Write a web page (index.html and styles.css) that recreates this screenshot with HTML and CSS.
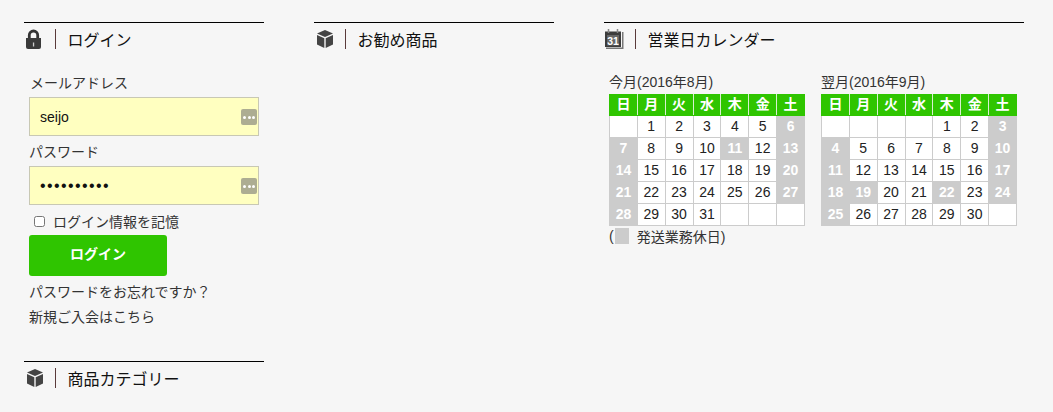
FILE: index.html
```html
<!DOCTYPE html>
<html lang="ja">
<head>
<meta charset="utf-8">
<title>ログイン</title>
<link rel="stylesheet" href="styles.css">
</head>
<body>
<div class="page">
  <div class="col col-side">
    <section class="box">
      <h2 class="head">
        <span class="ico"><svg width="18" height="20" viewBox="0 0 18 20"><path d="M4.300 10V6.200a4.200 4.200 0 0 1 8.400 0V10" fill="none" stroke="#333" stroke-width="2.800"/><path d="M1 9h15v9a2 2 0 0 1-2 2H3a2 2 0 0 1-2-2z" fill="#3a3a3a"/><rect x="7.900" y="13.500" width="1.300" height="4" fill="#ccc"/></svg></span>
        <span class="title">ログイン</span>
      </h2>
      <form class="login">
        <label class="lbl">メールアドレス</label>
        <div class="field"><input class="inp" type="text" value="seijo"><span class="key"><i></i><i></i><i></i></span></div>
        <label class="lbl lbl2">パスワード</label>
        <div class="field"><input class="inp inp-pw" type="password" value="abcdefghij"><span class="key"><i></i><i></i><i></i></span></div>
        <label class="rem"><input class="chk" type="checkbox"><span>ログイン情報を記憶</span></label>
        <button class="btn" type="button">ログイン</button>
        <a class="lnk lnk1">パスワードをお忘れですか？</a>
        <a class="lnk lnk2">新規ご入会はこちら</a>
      </form>
    </section>
    <section class="box box-cat">
      <h2 class="head">
        <span class="ico"><svg width="19" height="20" viewBox="0 0 19 20"><path d="M10 1l8 3.500L10 8 2 4.500z" fill="#444"/><path d="M2 6l7.300 3.200V19L2 15.600z" fill="#444"/><path d="M18 6l-7.300 3.200V19l7.300-3.400z" fill="#444"/></svg></span>
        <span class="title">商品カテゴリー</span>
      </h2>
    </section>
  </div>
  <div class="col col-side">
    <section class="box">
      <h2 class="head">
        <span class="ico"><svg width="19" height="20" viewBox="0 0 19 20"><path d="M10 1l8 3.500L10 8 2 4.500z" fill="#444"/><path d="M2 6l7.300 3.200V19L2 15.600z" fill="#444"/><path d="M18 6l-7.300 3.200V19l7.300-3.400z" fill="#444"/></svg></span>
        <span class="title">お勧め商品</span>
      </h2>
    </section>
  </div>
  <div class="col col-cal">
    <section class="box">
      <h2 class="head">
        <span class="ico"><svg width="21" height="20" viewBox="0 0 21 20"><path d="M18 3h1.500v17H2v-1.500h16z" fill="#777"/><rect x="1" y="2.500" width="16" height="15.500" fill="#3c3c3c"/><path d="M4.500 0v4M13.500 0v4" stroke="#888" stroke-width="1.500"/><rect x="3" y="6" width="12" height="10.500" fill="#666"/><text x="9" y="15.500" class="ico-num">31</text></svg></span>
        <span class="title">営業日カレンダー</span>
      </h2>
      <div class="cals">
        <div class="cal">
          <div class="cap">今月(2016年8月)</div>
          <table class="tbl">
            <tr><th>日</th><th>月</th><th>火</th><th>水</th><th>木</th><th>金</th><th>土</th></tr>
            <tr><td></td><td>1</td><td>2</td><td>3</td><td>4</td><td>5</td><td class="off">6</td></tr>
            <tr><td class="off">7</td><td>8</td><td>9</td><td>10</td><td class="off">11</td><td>12</td><td class="off">13</td></tr>
            <tr><td class="off">14</td><td>15</td><td>16</td><td>17</td><td>18</td><td>19</td><td class="off">20</td></tr>
            <tr><td class="off">21</td><td>22</td><td>23</td><td>24</td><td>25</td><td>26</td><td class="off">27</td></tr>
            <tr><td class="off">28</td><td>29</td><td>30</td><td>31</td><td></td><td></td><td></td></tr>
          </table>
          <div class="note">(<span class="swatch"></span>発送業務休日)</div>
        </div>
        <div class="cal">
          <div class="cap">翌月(2016年9月)</div>
          <table class="tbl">
            <tr><th>日</th><th>月</th><th>火</th><th>水</th><th>木</th><th>金</th><th>土</th></tr>
            <tr><td></td><td></td><td></td><td></td><td>1</td><td>2</td><td class="off">3</td></tr>
            <tr><td class="off">4</td><td>5</td><td>6</td><td>7</td><td>8</td><td>9</td><td class="off">10</td></tr>
            <tr><td class="off">11</td><td>12</td><td>13</td><td>14</td><td>15</td><td>16</td><td class="off">17</td></tr>
            <tr><td class="off">18</td><td class="off">19</td><td>20</td><td>21</td><td class="off">22</td><td>23</td><td class="off">24</td></tr>
            <tr><td class="off">25</td><td>26</td><td>27</td><td>28</td><td>29</td><td>30</td><td></td></tr>
          </table>
        </div>
      </div>
    </section>
  </div>
</div>
</body>
</html>
```
FILE: styles.css
```css
* { box-sizing: border-box; }
html, body { margin: 0; height: 100%; }
body {
  background: #f6f6f6;
  color: #333;
  font-family: "Liberation Sans", "Noto Sans CJK JP", sans-serif;
  overflow: hidden;
}
.page { display: flex; gap: 50px; padding: 22px 0 0 24px; }
.col-side { width: 240px; }
.col-cal { width: 420px; }
.head {
  display: flex;
  align-items: flex-start;
  margin: 0;
  border-top: 1px solid #000;
  padding-top: 6px;
  font-size: 16px;
  font-weight: 400;
  color: #111;
}
.ico { display: flex; flex: none; width: 32px; height: 20px; border-right: 1px solid #5a3a3a; margin-right: 11.500px; }
.ico svg { display: block; }
.col-side .ico svg { margin-left: 1px; }
.ico-num { font: bold 10.500px "Liberation Sans", sans-serif; fill: #fff; text-anchor: middle; }
.title { line-height: 24px; }
.login { display: flex; flex-direction: column; align-items: flex-start; padding: 20px 0 0 5px; font-size: 14px; }
.lbl { line-height: 20px; height: 24px; padding-left: 1px; }
.lbl2 { margin-top: 6px; padding-left: 0; }
.field { position: relative; width: 231px; }
.inp {
  display: block;
  width: 230px;
  height: 39px;
  border: 1px solid #c8c8b4;
  background: #ffffc0;
  padding: 0 10px;
  font: 14px "Liberation Sans", sans-serif;
  color: #111;
  outline: 0;
}
.inp-pw { font-size: 16px; letter-spacing: 1.400px; }
.key {
  position: absolute;
  right: 3px;
  top: 12px;
  display: flex;
  gap: 1.500px;
  align-items: center;
  justify-content: center;
  width: 16px;
  height: 16px;
  border-radius: 2px;
  background: #adad92;
}
.key i { width: 3px; height: 3px; border-radius: 50%; background: #fff; }
.rem { display: flex; align-items: center; height: 20px; margin-top: 6px; }
.chk { width: 11px; height: 11px; margin: 0 8px 0 5px; }
.btn {
  width: 138px;
  height: 41px;
  margin-top: 4px;
  padding: 0 0 5px;
  border: 0;
  border-radius: 3px;
  background: #2fc500;
  color: #fff;
  font: bold 14px "Liberation Sans", "Noto Sans CJK JP", sans-serif;
}
.lnk { display: block; line-height: 20px; color: #333; }
.lnk1 { margin-top: 6px; }
.lnk2 { margin-top: 5px; }
.box-cat { margin-top: 34px; }
.cals { display: flex; gap: 16px; padding: 20px 0 0 5px; }
.cal { width: 196px; font-size: 14px; }
.cap { line-height: 18px; height: 18px; margin-bottom: 3px; }
.tbl { border-collapse: collapse; table-layout: fixed; width: 196px; }
.tbl th, .tbl td { text-align: center; height: 22px; font-size: 14px; line-height: 16px; padding: 0 0 1px; }
.tbl th { height: 21px; padding-bottom: 2px; background: #2fc500; color: #fff; font-weight: 700; border: 1px solid #2fc500; border-right-color: #d8f0d0; }
.tbl th:last-child { border-right-color: #2fc500; }
.tbl td { background: #fff; border: 1px solid #ccc; color: #222; }
.tbl td.off { background: #ccc; color: #fff; font-weight: 700; }
.note { display: flex; align-items: center; height: 20px; color: #333; }
.swatch { width: 14px; height: 16px; background: #ccc; margin: 0 8px 0 1px; }
```
